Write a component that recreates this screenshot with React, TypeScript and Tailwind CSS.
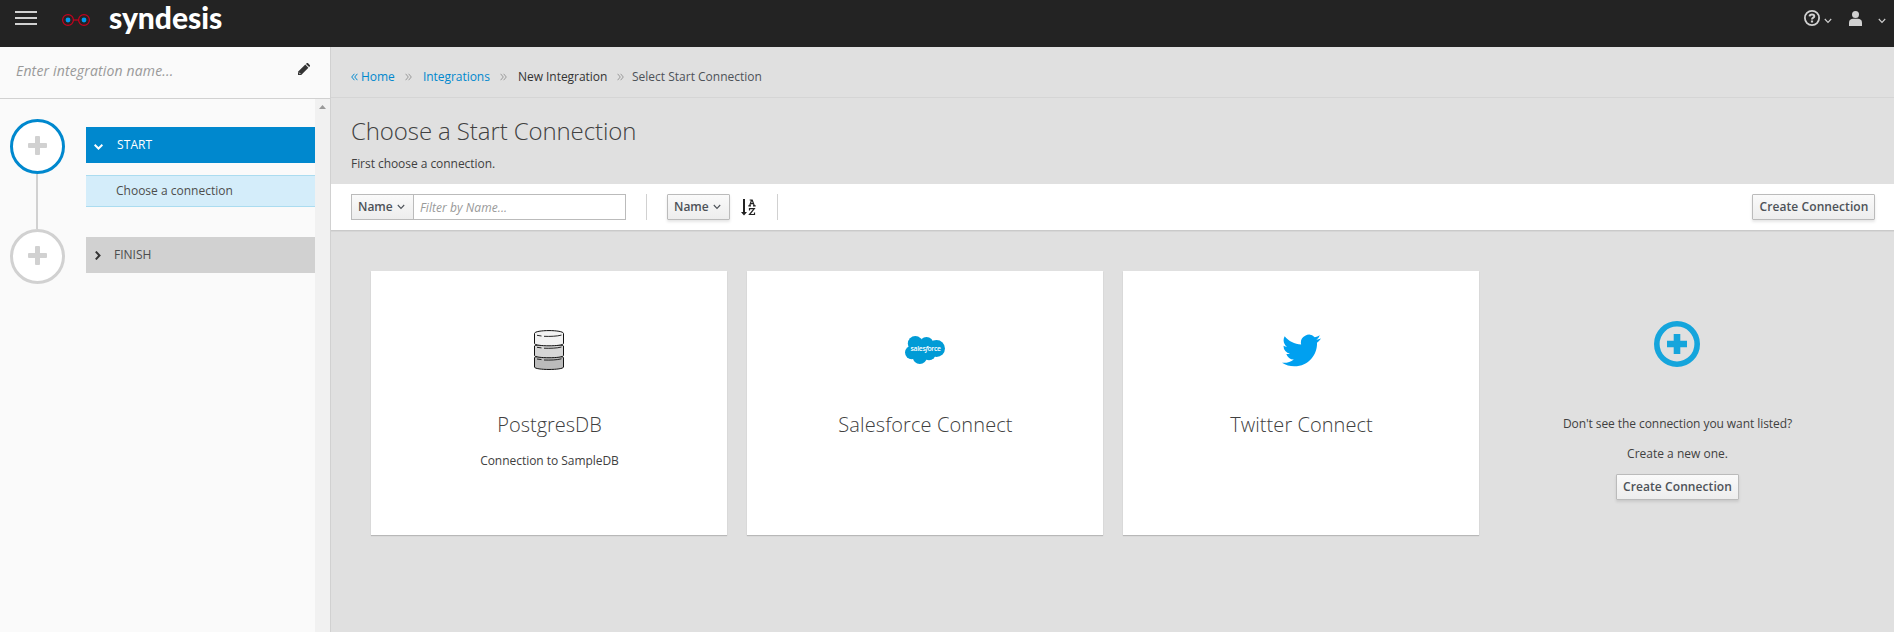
import React from 'react';

const AngleDown = ({ className = '' }: { className?: string }) => (
  <svg className={className} width="8" height="6" viewBox="0 0 8 6" fill="none" stroke="currentColor" strokeWidth="1.1">
    <path d="M.8 1 4 4.4 7.2 1" />
  </svg>
);

const DoubleAngle = ({ left = false, className = '' }: { left?: boolean; className?: string }) => (
  <svg className={className} width="7" height="8" viewBox="0 0 7 8" fill="none" stroke="currentColor" strokeWidth="1">
    {left ? <path d="M3.4.8.7 4l2.7 3.2M6.4.8 3.7 4l2.7 3.2" /> : <path d="M.6.8 3.3 4 .6 7.2M3.6.8 6.3 4 3.6 7.2" />}
  </svg>
);

const buttonLook =
  'flex h-[26px] items-center whitespace-nowrap border border-[#bbb] bg-linear-to-b from-[#fafafa] to-[#ededed] text-xs font-semibold leading-5 text-[#4d5258]';

const CreateButton = () => (
  <button className={`${buttonLook} w-[123px] justify-center rounded-[1px] pl-px tracking-[0.08px] shadow-[0_2px_3px_rgba(3,3,3,0.1)]`}>
    Create Connection
  </button>
);

const StepCircle = ({ active = false }: { active?: boolean }) => (
  <div
    className={`flex size-[55px] items-center justify-center rounded-full border-[3px] bg-white pb-[3px] ${
      active ? 'border-[#0088ce]' : 'border-[#d1d1d1]'
    }`}
  >
    <svg width="19" height="19" viewBox="0 0 19 19" fill="#d1d1d1">
      <rect x="7" y="0" width="5" height="19" rx="1" />
      <rect x="0" y="7" width="19" height="5" rx="1" />
    </svg>
  </div>
);

const Database = () => (
  <svg width="30" height="40" viewBox="0 0 30 40" stroke="#111" strokeWidth="1">
    <path d="M.5 27.5C.5 25.5 29.500 25.500 29.500 27.500V37C29.500 40.300.5 40.300.5 37Z" fill="#bbb" />
    <path d="M.5 16C.5 14 29.500 14 29.500 16V25.500C29.500 28.500.5 28.500.5 25.500Z" fill="#d6d6d6" />
    <path d="M.5 3.500C.5-.4 29.500-.4 29.500 3.500V13.500C29.500 16.600.5 16.600.5 13.500Z" fill="#f2f2f2" />
    <path d="M3 5.300l4.500.7M10 6.300c6 .3 13 0 17.500-1.200M3 17.300l4.500.6M10 18.200c6 .3 13 0 17.500-1.200M3 29l4.500.6M10 30c6 .3 13 0 17.500-1.200" fill="none" strokeWidth=".9" />
  </svg>
);

const Salesforce = () => (
  <svg width="40" height="28" viewBox="0 0 40 28">
    <g fill="#009bd6">
      <circle cx="10.300" cy="7.500" r="7.500" />
      <circle cx="21.500" cy="8" r="7" />
      <circle cx="31.500" cy="12.500" r="8.500" />
      <circle cx="6.700" cy="16.500" r="6.700" />
      <circle cx="14.800" cy="21" r="7" />
      <circle cx="24" cy="17.500" r="6.800" />
      <path d="M7 8h24v11H7z" />
    </g>
    <text x="5.500" y="15" fill="#fff" fontFamily="Open Sans, sans-serif" fontSize="6.800" fontWeight="600" textLength="30.500">
      sales<tspan fontStyle="italic">f</tspan>orce
    </text>
  </svg>
);

const Twitter = () => (
  <svg width="39" height="33" viewBox="0 1.800 24 20.400" preserveAspectRatio="none" fill="#00a0f0">
    <path d="M23.953 4.570a10 10 0 01-2.825.775 4.958 4.958 0 002.163-2.723c-.951.555-2.005.959-3.127 1.184a4.920 4.920 0 00-8.384 4.482C7.690 8.095 4.067 6.130 1.640 3.162a4.822 4.822 0 00-.666 2.475c0 1.710.870 3.213 2.188 4.096a4.904 4.904 0 01-2.228-.616v.060a4.923 4.923 0 003.946 4.827 4.996 4.996 0 01-2.212.085 4.936 4.936 0 004.604 3.417 9.867 9.867 0 01-6.102 2.105c-.390 0-.779-.023-1.170-.067a13.995 13.995 0 007.557 2.209c9.053 0 13.998-7.496 13.998-13.985 0-.210 0-.420-.015-.630A9.935 9.935 0 0024 4.590z" />
  </svg>
);

const cards = [
  { icon: <Database />, title: 'PostgresDB', text: 'Connection to SampleDB', track: 'tracking-normal' },
  { icon: <Salesforce />, title: 'Salesforce Connect', text: '', track: 'tracking-[0.1px]' },
  { icon: <Twitter />, title: 'Twitter Connect', text: '', track: 'tracking-[0.05px]' },
];

const Header = () => (
  <header className="flex h-[47px] shrink-0 bg-[#232323] text-[#d1d1d1]">
    <div className="ml-[15px] mt-[11px] flex h-[14px] w-[22px] flex-col justify-between">
      <i className="h-[2px] bg-current" />
      <i className="h-[2px] bg-current" />
      <i className="h-[2px] bg-current" />
    </div>
    <svg className="ml-[25px] mt-[14px]" width="28" height="12" viewBox="0 0 28 12" fill="none" stroke="#c8001e" strokeWidth="1.200">
      <circle cx="6" cy="6" r="5.400" />
      <circle cx="22" cy="6" r="5.400" />
      <path d="M11.500 6h5" />
      <circle cx="6" cy="6" r="2.400" fill="#0099f0" stroke="none" />
      <circle cx="22" cy="6" r="2.400" fill="#0099f0" stroke="none" />
    </svg>
    <div className="-mt-px ml-[19px] w-[120px] font-['Lato',sans-serif] text-[30px] font-black leading-[36px] tracking-[-0.05px] text-white">syndesis</div>
    <svg className="ml-auto mt-[10px]" width="16" height="16" viewBox="0 0 16 16" fill="none" stroke="currentColor">
      <circle cx="8" cy="8" r="7.100" strokeWidth="1.800" />
      <path d="M5.600 6.300C5.800 3.900 10.300 3.800 10.300 6.300 10.300 7.700 8 7.700 8 9.500" strokeWidth="2" />
      <path d="M8 10.500v2" strokeWidth="2.200" />
    </svg>
    <AngleDown className="ml-[4.500px] mt-[18px]" />
    <svg className="ml-[17px] mt-[11px]" width="13" height="15" viewBox="0 0 13 15" fill="currentColor">
      <circle cx="6.500" cy="3.500" r="3.500" />
      <path d="M0 15v-3.500C0 9 2 7.800 4 7.800h5c2 0 4 1.200 4 3.700V15z" />
    </svg>
    <AngleDown className="ml-[15.500px] mr-[8.500px] mt-[18px]" />
  </header>
);

const Sidebar = () => (
  <aside className="flex w-[331px] shrink-0 flex-col border-r border-[#d1d1d1] bg-[#fafafa]">
    <div className="flex h-[52px] shrink-0 justify-between border-b border-[#d1d1d1] pl-4 pr-5">
      <span className="mt-[14px] text-sm italic leading-5 tracking-[0.16px] text-[#999]">Enter integration name...</span>
      <svg className="mt-4" width="12" height="12" viewBox="0 0 12 12" fill="#333">
        <path d="M0 12v-3.200L7.300 1.600l3.100 3.100L3.200 12zM8 .9 8.600.3a1.100 1.100 0 0 1 1.500 0l1.600 1.600a1.100 1.100 0 0 1 0 1.500l-.6.600z" />
        <path d="M1 9.600 2.400 11" stroke="#fafafa" strokeWidth=".9" />
      </svg>
    </div>
    <div className="flex flex-1">
      <div className="flex w-[86px] flex-col items-start pl-[10px] pt-5">
        <StepCircle active />
        <div className="ml-[26px] h-[55px] w-[2px] bg-[#d1d1d1]" />
        <StepCircle />
      </div>
      <div className="flex flex-1 flex-col pt-7 text-xs text-[#4d4d4d]">
        <div className="flex h-9 items-center bg-[#0088ce] pl-[8px] text-white">
          <svg className="mt-[3px]" width="9" height="6" viewBox="0 0 9 6" fill="none" stroke="currentColor" strokeWidth="2">
            <path d="M.6.8 4.500 4.500 8.400.8" />
          </svg>
          <span className="ml-[14px] leading-5 tracking-[0.1px]">START</span>
        </div>
        <div className="mt-3 flex h-8 items-center border-y border-[#abdcf0] bg-[#d4edfa] pl-[30px] leading-5">Choose a connection</div>
        <div className="mt-[30px] flex h-9 items-center bg-[#d1d1d1] pl-[9px]">
          <svg className="mt-[1px]" width="6" height="9" viewBox="0 0 6 9" fill="none" stroke="#333" strokeWidth="2">
            <path d="M.8.600 4.500 4.500.8 8.400" />
          </svg>
          <span className="ml-[13px] leading-5">FINISH</span>
        </div>
      </div>
      <div className="flex w-[15px] justify-center bg-[#f1f1f1]">
        <svg className="mt-[6px]" width="7" height="4" viewBox="0 0 7 4" fill="#999">
          <path d="M0 4 3.500 0 7 4z" />
        </svg>
      </div>
    </div>
  </aside>
);

export default function App() {
  return (
    <div className="flex h-[632px] w-[1894px] flex-col overflow-hidden bg-[#e0e0e0] font-['Open_Sans',sans-serif] text-xs text-[#404040]">
      <Header />
      <div className="flex min-h-0 flex-1">
        <Sidebar />
        <main className="flex flex-1 flex-col">
          <nav className="flex h-[51px] items-center whitespace-nowrap border-b border-[#d5d5d5] pl-5 pt-[9px] leading-5">
            <DoubleAngle left className="mt-[1px] text-[#0088ce]" />
            <span className="ml-[3px] w-[33px] tracking-[-0.05px] text-[#0088ce]">Home</span>
            <DoubleAngle className="ml-[11px] mt-[1px] text-[#999]" />
            <span className="ml-[11px] w-[67px] tracking-[-0.05px] text-[#0088ce]">Integrations</span>
            <DoubleAngle className="ml-[10px] mt-[1px] text-[#999]" />
            <span className="ml-[11px] w-[89px] tracking-[-0.04px] text-[#333]">New Integration</span>
            <DoubleAngle className="ml-[10px] mt-[1px] text-[#999]" />
            <span className="ml-2 text-[#4d5258]">Select Start Connection</span>
          </nav>
          <div className="flex h-[86px] flex-col pl-5">
            <h1 className="mt-[20px] text-2xl font-light leading-[26px] tracking-[-0.1px]">Choose a Start Connection</h1>
            <p className="mt-[10px] leading-5 tracking-[-0.05px]">First choose a connection.</p>
          </div>
          <div className="flex h-[46px] shrink-0 items-center bg-white pl-5 pr-[19px] shadow-[0_1px_0_#cacaca,0_2px_0_#d6d6d6]">
            <button className={`${buttonLook} w-[63px] pl-[6px]`}>
              Name <AngleDown className="ml-[4px]" />
            </button>
            <div className="-ml-px flex h-[26px] w-[213px] items-center border border-[#bbb] bg-white pl-[6px] pt-[2px] italic tracking-[0.07px] text-[#999]">
              Filter by Name...
            </div>
            <div className="ml-5 h-[26px] w-px bg-[#d1d1d1]" />
            <button className={`${buttonLook} ml-5 w-[63px] rounded-[1px] pl-[6px] shadow-[0_2px_3px_rgba(3,3,3,0.1)]`}>
              Name <AngleDown className="ml-[4px]" />
            </button>
            <svg className="ml-[11px]" width="15" height="17" viewBox="0 0 15 17" fill="#222">
              <path d="M2 0h2v13h2L3 16.500 0 13h2z" />
              <g fill="none" stroke="#222" strokeWidth="1.200">
                <path d="M8.700 6.500 10.600 1h.6L13.200 6.500M9.400 4.700h3.200M8.700 1h2.500M7.300 6.800h2.700M12 6.800h2.700" />
                <path d="M8.500 11.500V9.600h4.800L8.500 15.500h5v-2" />
              </g>
            </svg>
            <div className="ml-[21px] h-[26px] w-px bg-[#d1d1d1]" />
            <div className="ml-auto">
              <CreateButton />
            </div>
          </div>
          <div className="flex gap-5 pl-10 pt-[41px]">
            {cards.map((c) => (
              <section key={c.title} className="flex h-[264px] w-[356px] flex-col items-center bg-white pt-[47px] shadow-[0_1px_1px_rgba(3,3,3,0.18)]">
                <div className="flex h-[64px] items-center">{c.icon}</div>
                <h2 className={`mt-[30px] pl-px text-xl font-light leading-[26px] ${c.track}`}>{c.title}</h2>
                <p className="mt-[13px] pl-px leading-5 tracking-[-0.04px]">{c.text}</p>
              </section>
            ))}
            <section className="flex h-[264px] w-[356px] flex-col items-center pt-[50px]">
              <svg width="46" height="46" viewBox="0 0 46 46" fill="none" stroke="#15a5dc">
                <circle cx="23" cy="23" r="20.200" strokeWidth="5.600" />
                <path d="M23 13v20M13 23h20" strokeWidth="6.600" />
              </svg>
              <p className="mt-[47px] pl-px leading-5 tracking-[-0.07px]">Don't see the connection you want listed?</p>
              <p className="mt-[10px] mb-[10px] pl-px leading-5">Create a new one.</p>
              <CreateButton />
            </section>
          </div>
        </main>
      </div>
    </div>
  );
}
